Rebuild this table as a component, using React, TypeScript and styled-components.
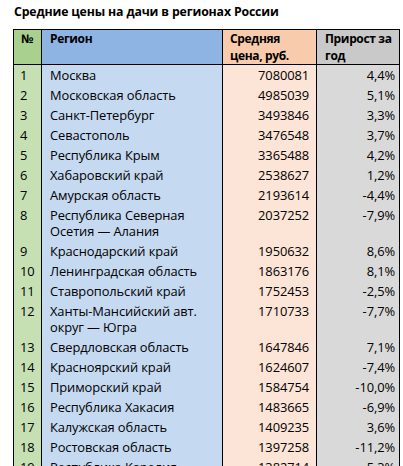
import styled, { createGlobalStyle } from "styled-components";

type Row = { n: number; region: string; price: number; growth: string };

const rows: Row[] = [
  { n: 1, region: "Москва", price: 7080081, growth: "4,4%" },
  { n: 2, region: "Московская область", price: 4985039, growth: "5,1%" },
  { n: 3, region: "Санкт-Петербург", price: 3493846, growth: "3,3%" },
  { n: 4, region: "Севастополь", price: 3476548, growth: "3,7%" },
  { n: 5, region: "Республика Крым", price: 3365488, growth: "4,2%" },
  { n: 6, region: "Хабаровский край", price: 2538627, growth: "1,2%" },
  { n: 7, region: "Амурская область", price: 2193614, growth: "-4,4%" },
  { n: 8, region: "Республика Северная Осетия — Алания", price: 2037252, growth: "-7,9%" },
  { n: 9, region: "Краснодарский край", price: 1950632, growth: "8,6%" },
  { n: 10, region: "Ленинградская область", price: 1863176, growth: "8,1%" },
  { n: 11, region: "Ставропольский край", price: 1752453, growth: "-2,5%" },
  { n: 12, region: "Ханты-Мансийский авт. округ — Югра", price: 1710733, growth: "-7,7%" },
  { n: 13, region: "Свердловская область", price: 1647846, growth: "7,1%" },
  { n: 14, region: "Красноярский край", price: 1624607, growth: "-7,4%" },
  { n: 15, region: "Приморский край", price: 1584754, growth: "-10,0%" },
  { n: 16, region: "Республика Хакасия", price: 1483665, growth: "-6,9%" },
  { n: 17, region: "Калужская область", price: 1409235, growth: "3,6%" },
  { n: 18, region: "Ростовская область", price: 1397258, growth: "-11,2%" },
  { n: 19, region: "Республика Карелия", price: 1382714, growth: "5,3%" },
  { n: 20, region: "Ярославская область", price: 1351208, growth: "2,1%" },
];

const GlobalStyle = createGlobalStyle`
  body {
    margin: 0;
    background: #ffffff;
    font-family: "Open Sans", "Liberation Sans", sans-serif;
    color: #000;
    overflow: hidden;
  }
`;

export default function App() {
  return (
    <>
      <GlobalStyle />
      <Page>
        <Title>Средние цены на дачи в регионах России</Title>
        <Table>
          <colgroup>
            <col style={{ width: 28 }} />
            <col style={{ width: 181 }} />
            <col style={{ width: 94 }} />
            <col style={{ width: 83 }} />
          </colgroup>
          <thead>
            <tr>
              <Head $bg="#a9d08e" $pad="7px">№</Head>
              <Head $bg="#8db4e2" $pad="8px">Регион</Head>
              <Head $bg="#f8cbad" $pad="7px">
                Средняя
                <br />
                цена, руб.
              </Head>
              <Head $bg="#c9c9c9" $pad="8px">
                Прирост за
                <br />
                год
              </Head>
            </tr>
          </thead>
          <tbody>
            {rows.map((r) => (
              <tr key={r.n}>
                <Cell $bg="#c6e0b4" $pad="0 0 0 6px">{r.n}</Cell>
                <Cell $bg="#c5d9f1" $pad="0 6px 0 8px">{r.region}</Cell>
                <Cell $bg="#fce4d6" $pad="0 7px 0 0" $right>{r.price}</Cell>
                <Cell $bg="#d9d9d9" $pad="0 4px 0 0" $right>{r.growth}</Cell>
              </tr>
            ))}
          </tbody>
        </Table>
      </Page>
    </>
  );
}

const Page = styled.div`
  padding: 3px 0 0 13px;
`;

const Title = styled.div`
  font-size: 12.3px;
  font-weight: 700;
  line-height: 18px;
  padding-left: 1px;
  margin-bottom: 8px;
  letter-spacing: -0.15px;
`;

const Table = styled.table`
  border-collapse: collapse;
  table-layout: fixed;
  width: 387px;
  border: 1px solid #000;
`;

const Head = styled.th<{ $bg: string; $pad: string }>`
  background: ${(p) => p.$bg};
  border: 1px solid #000;
  text-align: left;
  vertical-align: top;
  white-space: nowrap;
  font-size: 12px;
  font-weight: 700;
  line-height: 17px;
  height: 33px;
  padding: 0 0 0 ${(p) => p.$pad};
  letter-spacing: -0.35px;
`;

const Cell = styled.td<{ $bg: string; $pad: string; $right?: boolean }>`
  background: ${(p) => p.$bg};
  border-left: 1px solid #000;
  border-right: 1px solid #000;
  text-align: ${(p) => (p.$right ? "right" : "left")};
  vertical-align: top;
  font-size: 12.9px;
  line-height: 16px;
  padding: ${(p) => p.$pad};
  padding-top: 1.5px;
  padding-bottom: 2.5px;
  letter-spacing: -0.1px;
`;
